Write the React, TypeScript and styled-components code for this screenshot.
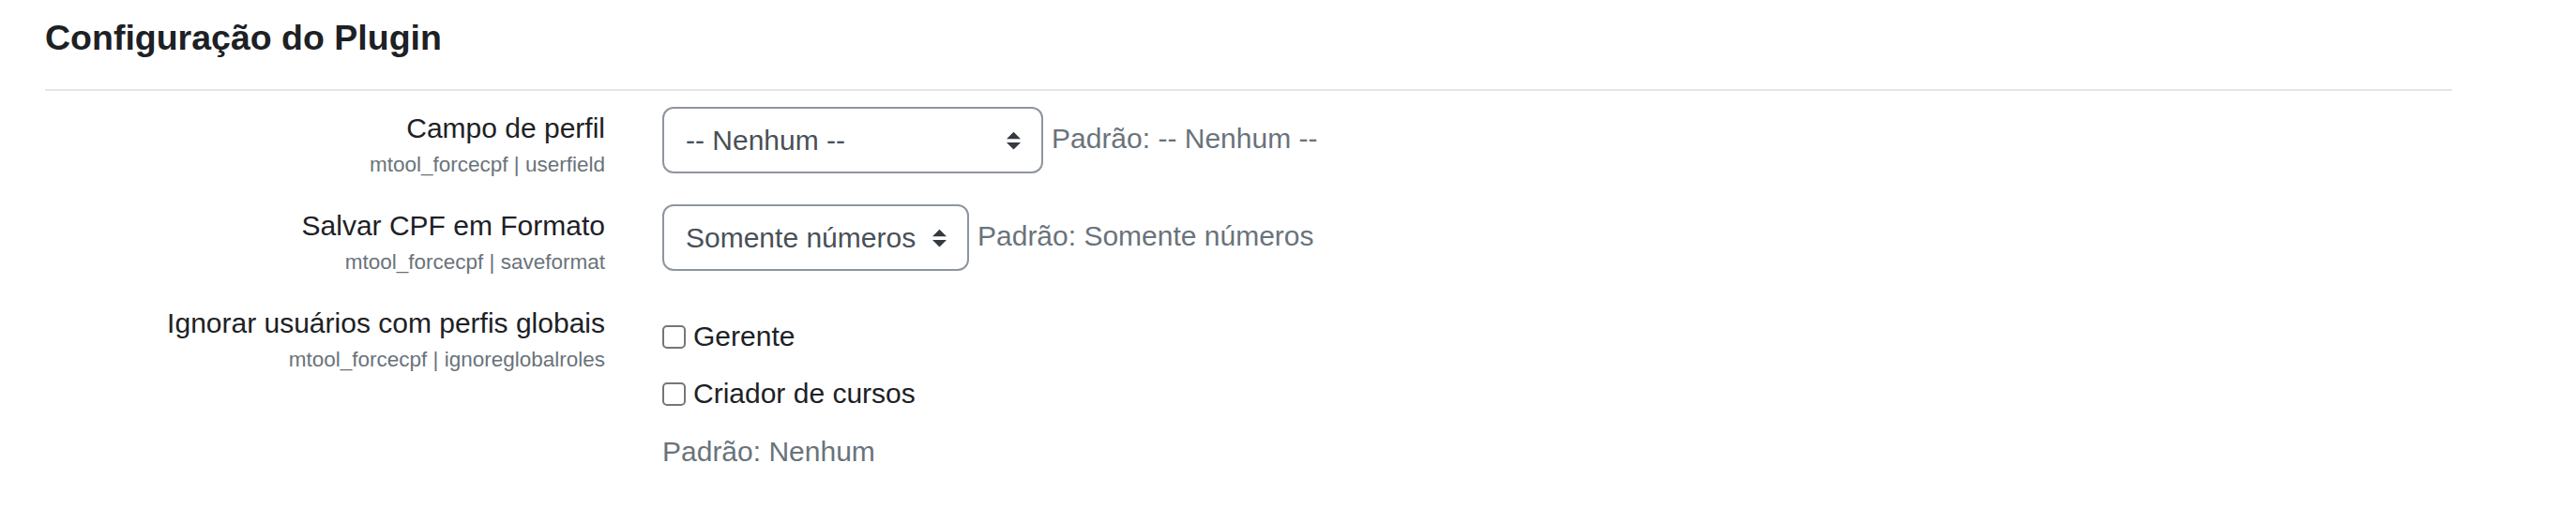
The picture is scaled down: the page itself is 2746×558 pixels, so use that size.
import React from "react";
import styled, { createGlobalStyle } from "styled-components";

const GlobalStyle = createGlobalStyle`
  html, body { margin: 0; padding: 0; background: #ffffff; }
  body {
    font-family: "Liberation Sans", Arial, Helvetica, sans-serif;
    color: #1d2125;
  }
  *, *::before, *::after { box-sizing: border-box; }
`;

const Page = styled.div`
  width: 2614px;
  padding: 18px 0 40px 48px;
`;

const Heading = styled.h3`
  margin: 0;
  font-size: 37.5px;
  font-weight: 700;
  line-height: 44px;
  color: #1d2125;
`;

const Divider = styled.hr`
  margin: 33px 0 17px;
  height: 0;
  border: 0;
  border-top: 2px solid #e4e4e4;
`;

const SettingList = styled.div`
  display: flex;
  flex-direction: column;
  gap: 25px;
`;

const SettingRow = styled.div`
  display: grid;
  grid-template-columns: 597px 1fr;
  column-gap: 61px;
  align-items: start;
`;

const LabelCol = styled.div`
  padding-top: 1px;
  text-align: right;
`;

const LabelText = styled.label`
  display: block;
  font-size: 30px;
  line-height: 44px;
  color: #1d2125;
`;

const ShortName = styled.span`
  display: block;
  font-size: 22.5px;
  line-height: 34px;
  color: #6a737b;
`;

const FieldCol = styled.div<{ $stack?: boolean }>`
  display: flex;
  flex-direction: ${(p) => (p.$stack ? "column" : "row")};
  align-items: flex-start;
  padding-top: ${(p) => (p.$stack ? 15 : 0)}px;
`;

const SelectWrap = styled.div<{ $width: number }>`
  position: relative;
  width: ${(p) => p.$width}px;
  flex: none;
`;

const Select = styled.select`
  appearance: none;
  -webkit-appearance: none;
  display: block;
  width: 100%;
  height: 71px;
  margin: 0;
  padding: 0 54px 0 23px;
  border: 2px solid #8f959e;
  border-radius: 12px;
  background: #ffffff;
  font-family: "Liberation Sans", Arial, Helvetica, sans-serif;
  font-size: 30px;
  line-height: 44px;
  color: #495057;
  outline: none;
`;

const Arrow = styled.svg`
  position: absolute;
  right: 24px;
  top: 50%;
  width: 15px;
  height: 19px;
  transform: translateY(-50%);
  pointer-events: none;
`;

const DefaultInfo = styled.div<{ $inline?: boolean }>`
  margin: ${(p) => (p.$inline ? "12px 0 0 9px" : "18px 0 0 0")};
  font-size: 30px;
  line-height: 44px;
  color: #6a737b;
  white-space: nowrap;
`;

const CheckList = styled.div`
  display: flex;
  flex-direction: column;
  gap: 17px;
`;

const CheckRow = styled.label`
  display: flex;
  align-items: center;
  gap: 8px;
  height: 44px;
  font-size: 30px;
  line-height: 44px;
  color: #1d2125;
`;

const CheckBox = styled.input`
  appearance: none;
  -webkit-appearance: none;
  flex: none;
  width: 25px;
  height: 25px;
  margin: 0;
  border: 2px solid #767676;
  border-radius: 5px;
  background: #ffffff;
`;

const SortArrows = () => (
  <Arrow viewBox="0 0 4 5" aria-hidden="true">
    <path d="M2 0L0 2h4zm0 5L0 3h4z" fill="#343a40" />
  </Arrow>
);

type SelectSetting = {
  label: string;
  shortname: string;
  options: string[];
  width: number;
  defaultText: string;
};

const selects: SelectSetting[] = [
  {
    label: "Campo de perfil",
    shortname: "mtool_forcecpf | userfield",
    options: ["-- Nenhum --"],
    width: 406,
    defaultText: "Padrão: -- Nenhum --",
  },
  {
    label: "Salvar CPF em Formato",
    shortname: "mtool_forcecpf | saveformat",
    options: ["Somente números"],
    width: 327,
    defaultText: "Padrão: Somente números",
  },
];

const roles = ["Gerente", "Criador de cursos"];

export default function App() {
  return (
    <>
      <GlobalStyle />
      <Page>
        <Heading>Configuração do Plugin</Heading>
        <Divider />
        <SettingList>
          {selects.map((s) => (
            <SettingRow key={s.label}>
              <LabelCol>
                <LabelText>{s.label}</LabelText>
                <ShortName>{s.shortname}</ShortName>
              </LabelCol>
              <FieldCol>
                <SelectWrap $width={s.width}>
                  <Select defaultValue={s.options[0]}>
                    {s.options.map((o) => (
                      <option key={o}>{o}</option>
                    ))}
                  </Select>
                  <SortArrows />
                </SelectWrap>
                <DefaultInfo $inline>{s.defaultText}</DefaultInfo>
              </FieldCol>
            </SettingRow>
          ))}
          <SettingRow>
            <LabelCol>
              <LabelText>Ignorar usuários com perfis globais</LabelText>
              <ShortName>mtool_forcecpf | ignoreglobalroles</ShortName>
            </LabelCol>
            <FieldCol $stack>
              <CheckList>
                {roles.map((r) => (
                  <CheckRow key={r}>
                    <CheckBox type="checkbox" />
                    {r}
                  </CheckRow>
                ))}
              </CheckList>
              <DefaultInfo>Padrão: Nenhum</DefaultInfo>
            </FieldCol>
          </SettingRow>
        </SettingList>
      </Page>
    </>
  );
}
